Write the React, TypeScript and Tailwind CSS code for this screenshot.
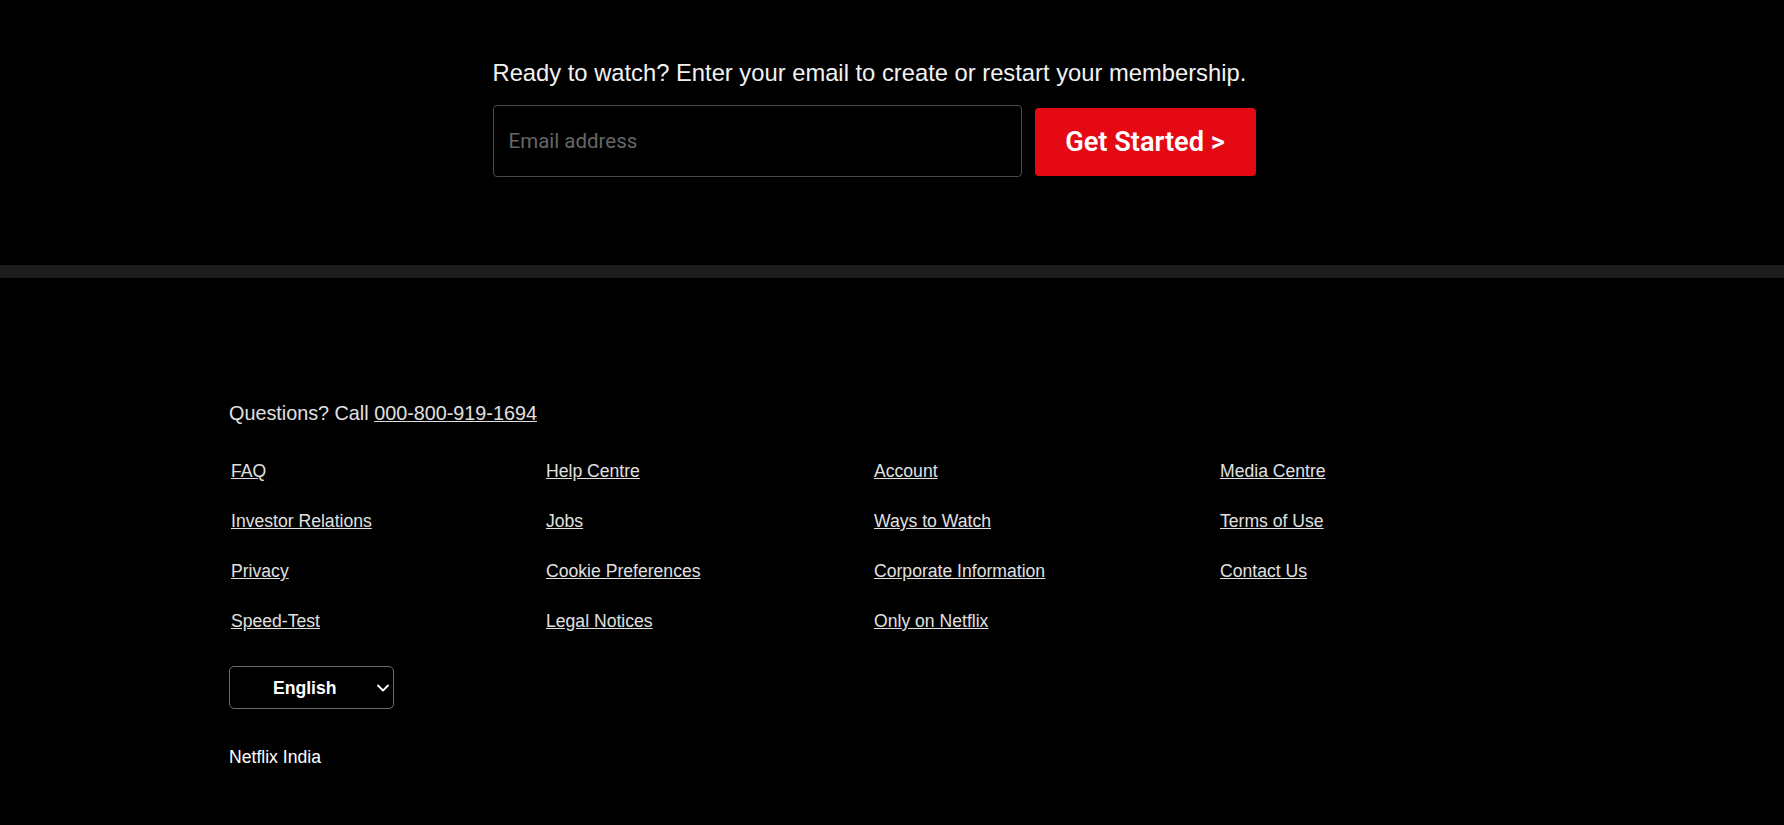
const footerColumns = [
  ["FAQ", "Investor Relations", "Privacy", "Speed-Test"],
  ["Help Centre", "Jobs", "Cookie Preferences", "Legal Notices"],
  ["Account", "Ways to Watch", "Corporate Information", "Only on Netflix"],
  ["Media Centre", "Terms of Use", "Contact Us"],
];

export default function App() {
  return (
    <div className="min-h-screen bg-black font-['Liberation_Sans',Arial,sans-serif] text-white">
      {/* Email signup */}
      <section className="flex justify-center pr-[36px] pt-[59px] pb-[88px]">
        <div className="w-[763px]">
          <h3 className="text-[23.76px] leading-[28px] text-[#f2f2f2]">
            Ready to watch? Enter your email to create or restart your membership.
          </h3>
          <form className="mt-[18px] flex items-center gap-[13px]" onSubmit={(e) => e.preventDefault()}>
            <input
              type="email"
              placeholder="Email address"
              className="h-[72px] w-[529px] rounded-[4px] border border-[#4a4a4a] bg-black px-[15px] font-['Roboto',sans-serif] text-[20.5px] text-white outline-none placeholder:text-[#666666]"
            />
            <button
              type="submit"
              className="mt-[2px] flex h-[68px] w-[221px] items-center justify-center rounded-[4px] bg-[#e50914] font-['Roboto',sans-serif] text-[27.2px] font-semibold text-white"
            >
              Get Started &gt;
            </button>
          </form>
        </div>
      </section>

      {/* Divider */}
      <div className="h-[13px] bg-[#1c1c1c]" />

      {/* Footer */}
      <footer className="px-[229px] pt-[124px] pb-[50px]">
        <p className="text-[19.8px] leading-[23px] text-[#e0e0e0]">
          Questions? Call{" "}
          <a href="#" className="underline">
            000-800-919-1694
          </a>
        </p>

        <div className="mt-[36px] grid grid-cols-[315px_328px_346px_1fr] pl-[2px]">
          {footerColumns.map((col, i) => (
            <ul key={i} className="flex flex-col gap-[30px]">
              {col.map((label) => (
                <li key={label} className="text-[17.6px] leading-[20px]">
                  <a href="#" className="text-[#e0e0e0] underline">
                    {label}
                  </a>
                </li>
              ))}
            </ul>
          ))}
        </div>

        {/* Language picker */}
        <div className="mt-[35px] flex h-[43px] w-[165px] items-center rounded-[5px] border border-[#6b6b6b] pl-[43px] pr-[4px]">
          <span className="text-[17.6px] font-bold leading-[20px] text-white">English</span>
          <svg className="ml-auto" width="12" height="8" viewBox="0 0 12 8" fill="none">
            <path d="M1 1.5l5 5 5-5" stroke="white" strokeWidth="1.8" strokeLinecap="round" strokeLinejoin="round" />
          </svg>
        </div>

        <p className="mt-[38px] text-[17.6px] leading-[20px] text-white">Netflix India</p>
      </footer>
    </div>
  );
}
